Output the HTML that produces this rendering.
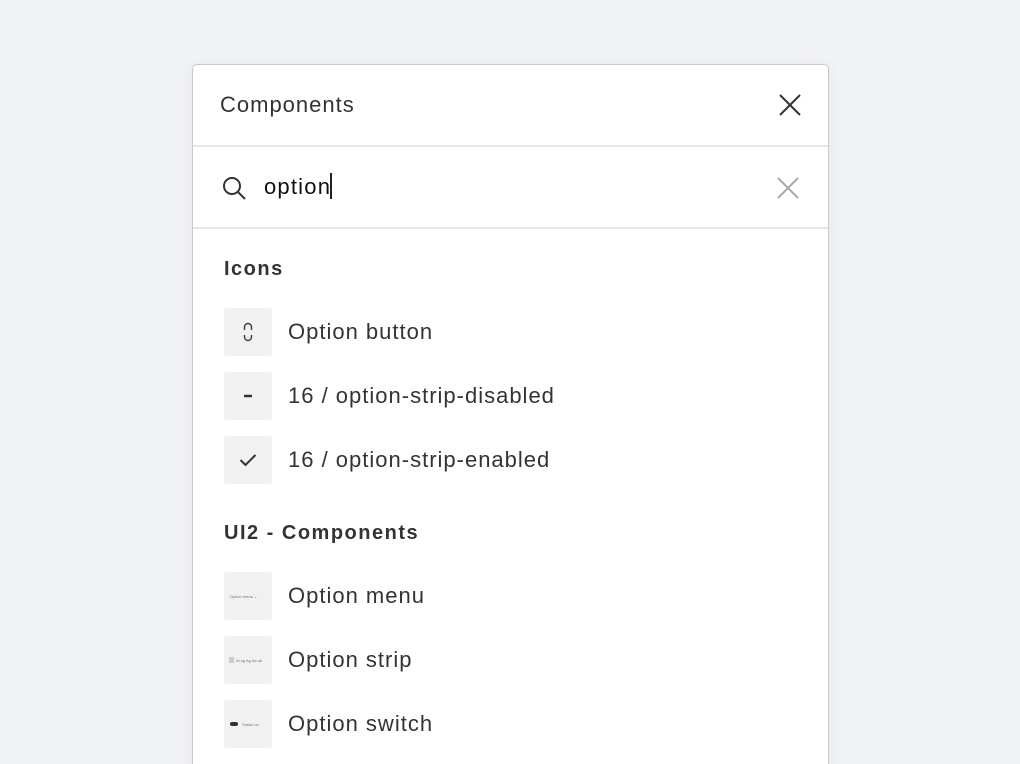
<!DOCTYPE html>
<html><head><style>
html,body{margin:0;width:1020px;height:764px;overflow:hidden}
body{background:#f1f2f6;font-family:"Liberation Sans",sans-serif;position:relative}
.p{position:absolute;left:192px;top:64px;width:635px;height:720px;background:#fff;border:1px solid #c9c9cc;border-radius:5px;box-shadow:0 2px 12px rgba(0,0,0,.06)}
.hd{height:80px;border-bottom:2px solid #e6e6e6;position:relative}
.hd span{position:absolute;left:27px;top:27px;font-size:22px;letter-spacing:1px;color:#333}
.sr{height:80px;border-bottom:2px solid #e6e6e6;position:relative}
.sr span{position:absolute;left:71px;top:26px;font-size:22px;letter-spacing:1.2px;color:#111}
.cur{display:inline-block;width:2px;height:26px;background:#222;vertical-align:-5px;margin-left:-1px}
.sec{position:absolute;left:31px;font-size:20px;letter-spacing:1.5px;font-weight:bold;color:#333}
.it{position:absolute;left:31px;height:48px;width:560px}
.ic{position:absolute;left:0;top:0;width:48px;height:48px;background:#f1f1f1;border-radius:3px}
.it .t{position:absolute;left:64px;top:11px;font-size:22px;letter-spacing:1px;color:#333}
.tiny{position:absolute;font-size:4px;color:#777;white-space:nowrap}
</style></head><body>
<div class="p">
<div class="hd"><span>Components</span>
<svg style="position:absolute;left:586px;top:29px" width="22" height="22"><path d="M1 1L21 21M21 1L1 21" stroke="#333" stroke-width="2"/></svg></div>
<div class="sr"><svg style="position:absolute;left:28px;top:28px" width="26" height="26"><circle cx="11" cy="11" r="8" fill="none" stroke="#333" stroke-width="2"/><path d="M17 17L24 24" stroke="#333" stroke-width="2"/></svg>
<span>option<i class="cur"></i></span>
<svg style="position:absolute;left:584px;top:30px" width="22" height="22"><path d="M1 1L21 21M21 1L1 21" stroke="#aaa" stroke-width="2"/></svg></div>
<div class="sec" style="top:193px">Icons</div>
<div class="it" style="top:243px"><div class="ic"><svg width="48" height="48"><path d="M20.5 22v-3a3.5 3.5 0 0 1 7 0v3M20.5 27v2a3.5 3.5 0 0 0 7 0v-2" fill="none" stroke="#444" stroke-width="1.5"/></svg></div><div class="t">Option button</div></div>
<div class="it" style="top:307px"><div class="ic"><svg width="48" height="48"><path d="M20 24h8" stroke="#333" stroke-width="2.5"/></svg></div><div class="t">16 / option-strip-disabled</div></div>
<div class="it" style="top:371px"><div class="ic"><svg width="48" height="48"><path d="M16.5 24l5 5 10-10" fill="none" stroke="#333" stroke-width="2"/></svg></div><div class="t">16 / option-strip-enabled</div></div>
<div class="sec" style="top:457px">UI2 - Components</div>
<div class="it" style="top:507px"><div class="ic"><span class="tiny" style="left:6px;top:22px">Option menu ⌄</span></div><div class="t">Option menu</div></div>
<div class="it" style="top:571px"><div class="ic"><span style="position:absolute;left:5px;top:21px;width:5px;height:6px;background:#ccc"></span><span class="tiny" style="left:12px;top:22px">Al ag Ag Ab ab</span></div><div class="t">Option strip</div></div>
<div class="it" style="top:635px"><div class="ic"><span style="position:absolute;left:6px;top:22px;width:8px;height:4px;background:#333;border-radius:2px"></span><span class="tiny" style="left:18px;top:22px">Switch on</span></div><div class="t">Option switch</div></div>
</div>
</body></html>
